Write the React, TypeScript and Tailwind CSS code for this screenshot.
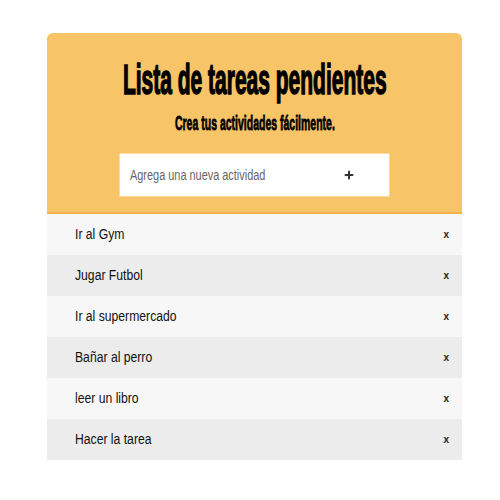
import { Plus } from 'lucide-react'

const tasks = ['Ir al Gym', 'Jugar Futbol', 'Ir al supermercado', 'Bañar al perro', 'leer un libro', 'Hacer la tarea']

export default function App() {
  return (
    <div className="min-h-[500px] bg-white pt-[33px]" style={{ fontFamily: '"Liberation Sans", Arial, sans-serif' }}>
      <div className="ml-[47px] w-[415px]">
        <div className="flex flex-col items-center rounded-t-[6px] border-b-2 border-[#f4b04a] bg-[#f8c468] pt-[24px] h-[181px]">
          <h1 className="h-[46px] text-[42px] font-bold leading-[46px] text-black whitespace-nowrap scale-x-[0.5] [-webkit-text-stroke:1.5px_#000]">
            Lista de tareas pendientes
          </h1>
          <p className="mt-[8px] h-[24px] text-[21px] font-bold leading-[24px] text-black whitespace-nowrap scale-x-[0.5] [-webkit-text-stroke:0.8px_#000]">
            Crea tus actividades fácilmente.
          </p>
          <div className="mt-[18px] flex h-[44px] w-[271px] items-center border border-[#fbd9a0] bg-white pl-[10px]">
            <div className="w-[213px]">
              <span className="block origin-left scale-x-[0.78] text-[14px] text-[#666] whitespace-nowrap">Agrega una nueva actividad</span>
            </div>
            <Plus size={12} strokeWidth={4} className="text-[#333]" />
          </div>
        </div>
        <ul>
          {tasks.map((t, i) => (
            <li
              key={t}
              className={i % 2 === 0 ? 'flex h-[41px] items-center justify-between bg-[#f7f7f7] pl-[28px] pr-[13px]' : 'flex h-[41px] items-center justify-between bg-[#ececec] pl-[28px] pr-[13px]'}
            >
              <span className="origin-left scale-x-[0.87] text-[14px] text-[#111] whitespace-nowrap">{t}</span>
              <span className="text-[10px] font-bold text-[#222]">x</span>
            </li>
          ))}
        </ul>
      </div>
    </div>
  )
}
